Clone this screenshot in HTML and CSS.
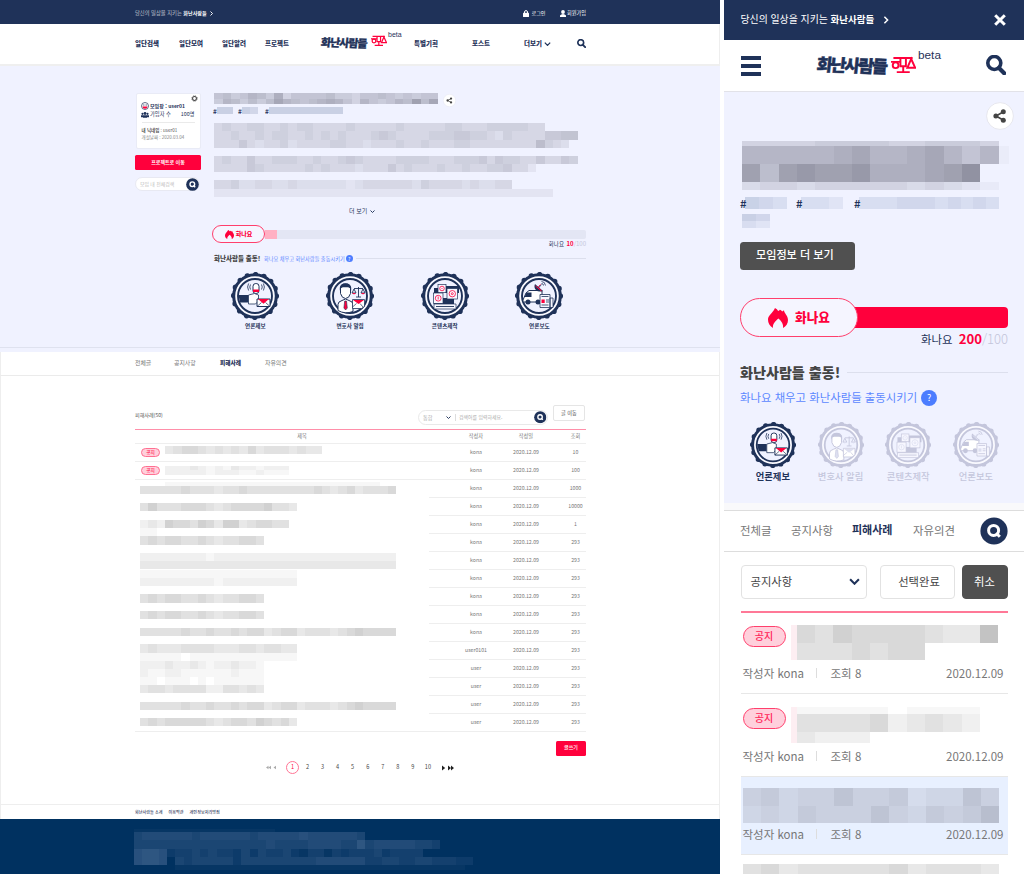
FILE: index.html
```html
<!DOCTYPE html>
<html lang="ko">
<head>
<meta charset="utf-8">
<title>화난사람들</title>
<link rel="stylesheet" href="styles.css">
</head>
<body>
<svg class="defs" width="0" height="0">
  <symbol id="i-search" viewBox="0 0 20 20"><circle cx="8.3" cy="8" r="6.500" fill="none" stroke="currentColor" stroke-width="3.600"/><path d="M13 13l5.200 5.200" stroke="currentColor" stroke-width="4.200" stroke-linecap="round"/></symbol>
  <symbol id="i-find" viewBox="0 0 28 28"><circle cx="14" cy="14" r="13.6" fill="#1f3259"/><circle cx="13.6" cy="13.4" r="5" fill="none" stroke="#fff" stroke-width="3"/><path d="M16 16l3.8 3.8" stroke="#fff" stroke-width="3"/></symbol>
  <symbol id="i-share" viewBox="0 0 28 28"><circle cx="14" cy="14" r="13.4" fill="#fff" stroke="#e2e2ea" stroke-width=".8"/><path d="M17.5 9.8L10 14l7.500 4.200" fill="none" stroke="#444" stroke-width="1.6"/><circle cx="17.300" cy="9.800" r="2.500" fill="#444"/><circle cx="9.900" cy="14" r="2.500" fill="#444"/><circle cx="17.300" cy="18.200" r="2.500" fill="#444"/></symbol>
  <symbol id="i-down" viewBox="0 0 10 6"><path d="M1 1l4 4 4-4" fill="none" stroke="currentColor" stroke-width="1.900"/></symbol>
  <symbol id="i-right" viewBox="0 0 6 10"><path d="M1 1l4 4-4 4" fill="none" stroke="currentColor" stroke-width="1.900"/></symbol>
  <symbol id="i-flame" viewBox="0 0 20 20"><path d="M5 20C1.500 18 0 15 0 11.500 0 7.500 4.500 5.500 7 0c1.500.8 2.500 1.800 3.200 3 .8-.2 1.300-.6 1.600-1.300 1.200.4 1.900 1 2.400 1.700l1.800-1.200C16.200 5.500 20 7.500 20 12c0 3.500-1.800 6.300-5 8 .6-4-1.500-6.800-4.600-9.500C7 13.500 4.400 16 5 20z" fill="#ff003c"/></symbol>
  <symbol id="i-scale" viewBox="0 0 26 18"><g fill="none" stroke="#ff003c" stroke-width="2"><path d="M2.500 2h20M9.800 2v8.500h5.700V2M12.700 10.500v6M6 16.700h13.500M0 6h9"/><circle cx="4.800" cy="9.500" r="3"/><path d="M21 3l-4 9.200h8.200z"/></g></symbol>
  <symbol id="i-seal" viewBox="0 0 48 48"><circle cx="24" cy="24" r="21.300" fill="none" stroke="currentColor" stroke-width="5.600" stroke-linecap="round" stroke-dasharray="0 8.365"/><circle cx="24" cy="24" r="21.300" fill="#fafaff" stroke="currentColor" stroke-width="3"/><circle cx="24" cy="24" r="17" fill="#f0f2ff" stroke="currentColor" stroke-width="1.900"/></symbol>
  <symbol id="i-report" viewBox="0 0 48 48"><use href="#i-seal"/><path d="M7.500 23h10v7.500H9z" fill="currentColor"/><path d="M17.500 23l6-1.500 4 1.500v6l-3 3h-7z" fill="#fff" stroke="currentColor" stroke-width=".8"/><rect x="22" y="11.500" width="6" height="10" rx="2.800" fill="#fff" stroke="currentColor"/><path d="M22 17.500h6v2.500h-6z" fill="var(--accent)"/><path d="M19.500 12.500q-1.500 2.500 0 5M17.600 11.500q-2 3.500 0 7M30.500 12.500q1.500 2.500 0 5M32.400 11.500q2 3.500 0 7" fill="none" stroke="currentColor" stroke-width=".8"/><path d="M26 27h13v7.500H26z" fill="#fff" stroke="currentColor"/><path d="M27 27h11l-5.500 4.800z" fill="var(--accent)"/><path d="M26 34.500l4.500-4M39 34.500l-4.500-4" stroke="currentColor" stroke-width=".7"/></symbol>
  <symbol id="i-lawyer" viewBox="0 0 48 48"><use href="#i-seal"/><path d="M12 38.500v-6q0-3 4-4l3.500-1.500 3.500 1.500q4 1 4 4v7q-8 3-15-1z" fill="#fff" stroke="currentColor"/><path d="M14.500 16q0-4 5-4t5 4v5.500q-1.500 5-5 5t-5-5z" fill="#fff" stroke="currentColor"/><path d="M13.800 18.500v-3q1-4.300 5.700-4.300t5.700 4.300v3q-.7-3-3-3.200h-5.400q-2.300.2-3 3.200z" fill="currentColor"/><path d="M18.700 29h1.800l.8 7-1.700 2-1.700-2z" fill="var(--accent)" stroke="currentColor" stroke-width=".6"/><path d="M32.500 15v10M28 16.500h9M30 25h5M28 17l-2 4h4zM37 17l-2 4h4z" fill="none" stroke="currentColor" stroke-width=".9"/><path d="M26 21h4l-2 1.500zM35 21h4l-2 1.500z" fill="var(--accent)"/><path d="M26.500 27.500h12v7l-3 2h-9z" fill="#fff" stroke="currentColor" stroke-width=".8"/><path d="M27 28h11l-5.500 4z" fill="var(--accent)"/><path d="M26.500 35l4-3.500M37 35l-3-3.500" stroke="currentColor" stroke-width=".7"/></symbol>
  <symbol id="i-content" viewBox="0 0 48 48"><use href="#i-seal"/><path d="M13 16h5v17h-5zM24 14h14v7H24z" fill="currentColor"/><rect x="15" y="26" width="18" height="9" fill="currentColor"/><g fill="#f7f7ff" stroke="currentColor" stroke-width=".7"><rect x="17" y="12.500" width="8" height="8"/><rect x="26" y="16.500" width="10.500" height="10.500"/><rect x="12.500" y="21" width="9.500" height="10.500"/><path d="M13 32h22v5H13z"/></g><g fill="none" stroke="var(--accent)" stroke-width=".8"><circle cx="21" cy="16.500" r="2.300"/><circle cx="31.300" cy="21.700" r="3.200"/><circle cx="31.300" cy="21.700" r="1"/><circle cx="17.200" cy="26.200" r="2.900"/><path d="M20.500 16.500h1M17.200 24.500v3"/></g><path d="M15 34.500h18" stroke="currentColor" stroke-width=".9"/></symbol>
  <symbol id="i-media" viewBox="0 0 48 48"><use href="#i-seal"/><path d="M8 28l3-7 3-2.500h13V30H8z" fill="#fff" stroke="currentColor"/><path d="M11.500 20.500h5V25H9.500z" fill="currentColor"/><circle cx="13" cy="30" r="2.500" fill="currentColor"/><circle cx="23" cy="30" r="2.500" fill="currentColor"/><path d="M20 12l8 7q-4.500 1.500-7-1t-1-6z" fill="currentColor"/><path d="M20.500 14l6 5M26 18.500l-3-3 2.500-3" stroke="var(--accent)" fill="none"/><path d="M23.500 16l3-3.500M26.500 9.500q3.500 0 4 4M26.500 11.500q2 0 2 2" stroke="currentColor" fill="none" stroke-width=".8"/><path d="M25 22.500h10v13H25zM35 26h3v9.500h-3z" fill="#f7f7ff" stroke="currentColor" stroke-width=".8"/><path d="M26.500 24.500h7M31 28h3M31 30h3M26.500 33h7" stroke="currentColor" stroke-width=".8"/><path d="M26.500 27.500h3.200v3.500h-3.200z" fill="var(--accent)"/></symbol>
</svg>

<section class="desk">
  <div class="d-top"><span>당신의 일상을 지키는 <b>화난사람들</b></span><svg class="d-tr"><use href="#i-right"/></svg>
    <span class="d-login"><svg width="6" height="7" viewBox="0 0 6 7"><path d="M1.500 3V2q0-1.400 1.500-1.400T4.500 2v1" fill="none" stroke="#fff"/><rect width="6" height="4.200" y="2.800" rx=".5" fill="#fff"/></svg>로그인</span>
    <span class="d-join"><svg width="6" height="7" viewBox="0 0 6 7"><circle cx="3" cy="2" r="1.900" fill="#fff"/><path d="M0 7V5.500Q1 4 3 4t3 1.500V7z" fill="#fff"/></svg>회원가입</span>
  </div>
  <nav class="d-nav">
    <a>일단검색</a><a>일단모여</a><a>일단알려</a><a>프로젝트</a>
    <span class="logo"><b>화난사람들</b><svg><use href="#i-scale"/></svg><i>beta</i></span>
    <a>특별기획</a><a>포스트</a><a>더보기<svg class="caret"><use href="#i-down"/></svg></a><svg class="srch"><use href="#i-search"/></svg>
  </nav>
  <div class="d-hero">
    <aside class="side">
      <div class="card">
        <svg class="gear" viewBox="0 0 8 8"><circle cx="4" cy="4" r="2.200" fill="none" stroke="#444" stroke-width="1.200"/><circle cx="4" cy="4" r="3.100" fill="none" stroke="#444" stroke-width="1" stroke-dasharray="1.200 1.230"/></svg>
        <p class="who"><svg viewBox="0 0 8 8"><circle cx="4" cy="4" r="3.500" fill="#fff" stroke="#1f3259" stroke-width=".7"/><path d="M1.500 4.500h5Q6.300 6.800 4 6.800T1.500 4.500z" fill="#ff003c"/><path d="M2 3h1.500M4.500 3H6" stroke="#1f3259" stroke-width=".7"/></svg><b>모임장 : user01</b></p>
        <p class="who"><svg viewBox="0 0 8 8"><g fill="#1f3259"><circle cx="1.500" cy="2.800" r="1.100"/><circle cx="4" cy="2.500" r="1.400"/><circle cx="6.500" cy="2.800" r="1.100"/><path d="M0 6.200V4.200h8v2zM2 6.700V4.200h4v2.500z"/></g></svg><span>가입자 수</span><em>100명</em></p>
        <div class="info"><p><b>내 닉네임</b> : user01</p><p>개설날짜 : 2020.03.04</p></div>
      </div>
      <div class="go">프로젝트로 이동</div>
      <div class="sfield"><span>모임 내 전체검색</span><svg><use href="#i-find"/></svg></div>
    </aside>
    <main class="dmain">
      <div class="titleline"><div class="mz t" data-m="67568759466667554667656566 5875757a876789864865687b7a"></div><svg><use href="#i-share"/></svg></div>
      <div class="tags"><b>#</b><div class="mz g" data-m="55"></div><b>#</b><div class="mz g" data-m="54"></div><b>#</b><div class="mz g" data-m="555555555"></div></div>
      <div class="mz p" data-m="4544554454554444544444544444554445555544 44544545544545454445654444555665543544446677 4446434453444455443444544544455444444448543"></div>
      <div class="mz p" data-m="45446445554454456544445555444555646554464465 444465444445454443444645444544544556442"></div>
      <div class="mz p" data-m="445334433433333323444444354444343344 22222222222222222222222222222222222222222"></div>
      <div class="more">더 보기<svg class="caret"><use href="#i-down"/></svg></div>
      <div class="prog"><div class="pill"><svg><use href="#i-flame"/></svg>화나요</div><div class="track"><i></i></div></div>
      <div class="count">화나요 <b>10</b><s>/100</s></div>
      <div class="sec"><b>화난사람들 출동!</b><span>화나요 채우고 화난사람들 출동시키기</span><q>?</q><hr></div>
      <div class="badges">
        <div><svg><use href="#i-report"/></svg>언론제보</div><div><svg><use href="#i-lawyer"/></svg>변호사 알림</div><div><svg><use href="#i-content"/></svg>콘텐츠제작</div><div><svg><use href="#i-media"/></svg>언론보도</div>
      </div>
    </main>
  </div>
  <div class="d-tabs"><a>전체글</a><a>공지사항</a><a class="on">피해사례</a><a>자유의견</a></div>
  <div class="board">
    <div class="bar"><span class="cnt">피해사례(50)</span><div class="find"><span>통합</span><svg class="caret"><use href="#i-down"/></svg><em>검색어를 입력하세요.</em><svg class="fi"><use href="#i-find"/></svg></div><div class="move">글 이동</div></div>
    <div class="row head"><span>제목</span><span>작성자</span><span>작성일</span><span>조회</span></div>
    <div class="row"><span class="ttl"><u>공지</u><div class="mz b" data-m="3455434343534443433"></div></span><span>kona</span><span>2020.12.09</span><span>10</span></div>
    <div class="row"><span class="ttl"><u>공지</u><div class="mz b n" data-m="222321213221222 222221222112111"></div></span><span>kona</span><span>2020.12.09</span><span>100</span></div>
    <div class="lower"><div class="mosaics" id="mosaics"></div><div class="cells" id="cells"></div></div>
    <div class="write">글쓰기</div>
    <div class="pages"><svg class="pl" viewBox="0 0 12 6"><path d="M3 .8v4.400L0 3zM6 .8v4.400L3 3zM12 .8v4.400L9 3z" fill="#aaa"/></svg><a class="on">1</a><a>2</a><a>3</a><a>4</a><a>5</a><a>6</a><a>7</a><a>8</a><a>9</a><a>10</a><svg class="pr" viewBox="0 0 12 6"><path d="M0 .5v5L3.200 3zM6 .5v5L9 3zM9 .5v5L12 3z" fill="#222"/></svg></div>
  </div>
  <div class="links"><a>화난사람들 소개</a><a>이용약관</a><a>개인정보처리방침</a></div>
  <footer><div class="mz f" data-m="11111111111111111 4555555455555545555565555554 4444444444444444544445555447455555443 67762334343324243342133132333423333 67760434444424444444445555553344334433322 0000011111111111111111111111111111111111"></div></footer>
</section>

<section class="mob">
  <div class="m-top"><span>당신의 일상을 지키는 <b>화난사람들</b></span><svg class="m-tr"><use href="#i-right"/></svg><svg class="m-x" viewBox="0 0 12 12"><path d="M1.200 1.200l9.600 9.600M10.800 1.200l-9.600 9.600" stroke="#fff" stroke-width="3"/></svg></div>
  <div class="m-head"><div class="burger"><i></i><i></i><i></i></div><span class="logo"><b>화난사람들</b><svg><use href="#i-scale"/></svg><i>beta</i></span><svg class="srch"><use href="#i-search"/></svg></div>
  <div class="m-hero">
    <svg class="share"><use href="#i-share"/></svg>
    <div class="mz mt" data-m="44445555445554 888889a889a8684a b7bcbbc999abd 34434444434321"></div>
    <div class="m-tags"><b>#</b><div class="mz mg" data-m="543"></div><b>#</b><div class="mz mg" data-m="332"></div><b>#</b><div class="mz mg" data-m="33344434343"></div></div>
    <div class="mz mg2" data-m="54 32"></div>
    <div class="m-btn">모임정보 더 보기</div>
    <div class="prog"><div class="pill"><svg><use href="#i-flame"/></svg>화나요</div><div class="track"></div></div>
    <div class="count">화나요 <b>200</b><s>/100</s></div>
    <div class="sec"><b>화난사람들 출동!</b><hr></div>
    <div class="sub"><span>화나요 채우고 화난사람들 출동시키기</span><q>?</q></div>
    <div class="badges"><div><svg><use href="#i-report"/></svg>언론제보</div><div class="off"><svg><use href="#i-lawyer"/></svg>변호사 알림</div><div class="off"><svg><use href="#i-content"/></svg>콘텐츠제작</div><div class="off"><svg><use href="#i-media"/></svg>언론보도</div></div>
    <hr class="end">
  </div>
  <div class="gapbar"></div>
  <div class="m-tabs"><a>전체글</a><a>공지사항</a><a class="on">피해사례</a><a>자유의견</a><svg><use href="#i-find"/></svg></div>
  <div class="m-tools"><div class="sel">공지사항<svg><use href="#i-down"/></svg></div><div class="done">선택완료</div><div class="cancel">취소</div></div>
  <div class="list">
    <div class="item"><div class="top"><u>공지</u><div class="mz l1" data-m="54655554338 4445455"></div></div><div class="meta"><span>작성자 kona</span><span>조회 8</span><span>2020.12.09</span></div></div>
    <div class="item"><div class="top"><u>공지</u><div class="mz l2" data-m="1111101111 4444523432 3222"></div></div><div class="meta"><span>작성자 kona</span><span>조회 8</span><span>2020.12.09</span></div></div>
    <div class="item sel3"><div class="mz l3" data-m="56455755634475 45465557546568"></div><div class="meta"><span>작성자 kona</span><span>조회 8</span><span>2020.12.09</span></div></div>
    <div class="item last"><div class="mz l3" data-m="45344444534443"></div></div>
  </div>
</section>
<script src="script.js"></script>
</body>
</html>
```

FILE: styles.css
```css
* { box-sizing: border-box; }
body { margin: 0; width: 1024px; height: 874px; overflow: hidden; display: flex; gap: 4px; background: #fff; font-family: "Noto Sans CJK KR", "Noto Sans", sans-serif; line-height: 1; white-space: nowrap; color: #1f3259; --accent: #ff003c; }
p, hr { margin: 0; border: 0; }
svg { flex: none; display: block; overflow: visible; }
.defs { position: absolute; }
i, em { font-style: normal; }
s, u { text-decoration: none; }
q { quotes: none; }
q::before, q::after { content: none; }

/* masked text blocks */
.mz { --cw: 8.27px; --ch: 8.27px; --rgb: 30, 30, 50; flex: none; }
.mz-row { display: flex; height: var(--ch); }
.mz-cell { width: var(--cw); height: 100%; flex: none; background: rgba(var(--rgb), var(--a)); }

.desk { width: 720px; height: 874px; flex: none; font-size: 5.3px; border-right: 1px solid #eee; }
.d-top { height: 24px; margin-right: -1px; padding: 2px 0 0 135px; background: #1f3259; color: #fff; display: flex; align-items: center; }
.d-top > span:first-child { width: 75px; font-weight: 300; }
.d-top b { font-weight: 700; font-size: 5.1px; }
.d-tr { width: 3px; height: 5px; }
.d-login { display: flex; align-items: center; gap: 2.500px; margin-left: 310px; width: 37px; font-size: 5.1px; }
.d-join { display: flex; align-items: center; gap: 1px; font-size: 5.2px; }
.d-nav { height: 42px; margin-right: -1px; padding: 0 0 2px 135px; border-bottom: 2px solid #efefef; display: grid; grid-template-columns: 44px 43px 43px 56px 93px 58px 52px 53px 9px; align-items: center; font-size: 6.500px; font-weight: 900; }
.d-nav .caret { display: inline-block; width: 7px; height: 4px; margin-left: 2px; }
.d-nav .srch { width: 9px; height: 9px; }
.logo { display: flex; align-items: center; }
.logo b { font-weight: 900; font-size: 11px; letter-spacing: -1px; width: 50px; transform: skew(-6deg, 2deg); -webkit-text-stroke: .3px; margin-top: -2px; }
.logo svg { width: 16px; height: 11.500px; margin-top: -4px; }
.logo i { font: 400 7px "Liberation Sans", sans-serif; margin: -17px 0 0 1px; }

.d-hero { height: 286px; margin-right: -1px; background: #f0f2ff; padding: 27px 0 0 135px; display: flex; position: relative; }
.d-hero::after { content: ""; position: absolute; left: 0; right: 0; bottom: 4px; height: 1px; background: #dfe2ef; }
.side { width: 77px; }
.card { width: 65px; height: 56px; margin-left: .5px; background: #fff; border: 1px solid #e9ebf6; border-radius: 2px; padding: 7px 5px 0; position: relative; }
.gear { position: absolute; width: 7px; height: 7px; right: 2px; top: 1px; }
.who { display: flex; height: 9px; align-items: center; font-size: 5.300px; }
.who b { font-size: 5px; }
.who svg { width: 8px; height: 8px; margin: 0 1.500px 0 -1px; }
.who em { margin-left: auto; }
.info { border-top: 1px solid #eaeaea; margin-top: 3px; padding-top: 5px; font-size: 4.500px; color: #555; }
.info p { height: 7px; }
.info p + p { color: #888; }
.go { width: 66px; height: 15px; margin-top: 6px; background: #ff003c; border-radius: 1.500px; color: #fff; font-weight: 700; font-size: 5px; text-align: center; line-height: 13px; }
.sfield { width: 65px; height: 14px; margin-top: 7px; border: 1px solid #e8e9f2; border-radius: 7px; background: #fff; display: flex; align-items: center; justify-content: space-between; padding-left: 4px; font-size: 4.900px; color: #bbb; }
.sfield svg { width: 13px; height: 13px; margin-right: 0; }
.dmain { width: 374px; }
.titleline { display: flex; height: 14px; padding-left: 2px; }
.titleline svg { width: 13px; height: 13px; margin: 1px 0 0 5px; }
.mz.t { --cw: 8.620px; --ch: 5.500px; }
.tags { display: flex; height: 16px; padding-left: 1px; font-size: 6.500px; align-items: flex-start; }
.tags b { width: 3.500px; margin-top: 1px; }
.mz.g { --rgb: 20, 50, 100; --ch: 7px; margin-right: 5px; }
.tags .mz:nth-of-type(2) { margin-right: 7px; }
.mz.p { margin: 0 0 8px 2px; }
.mz.p .mz-cell { opacity: .9; }
.more { display: flex; align-items: center; height: 12px; margin: 0 0 0 137px; font-size: 6px; }
.more .caret { width: 5px; height: 3px; margin: 1px 0 0 3px; }
.prog { display: flex; align-items: center; }
.pill { display: flex; align-items: center; justify-content: center; border: 1px solid #ff3f6c; color: #ff003c; font-weight: 900; background: #f5f5ff; flex: none; }
.desk .prog { height: 19px; margin-top: 8px; }
.desk .pill { width: 53px; height: 18px; border-radius: 9px; font-size: 6px; gap: 2px; }
.desk .pill svg { width: 9px; height: 9px; }
.desk .track { flex: 1; height: 9.500px; background: #e3e6f4; border-radius: 0 2px 2px 0; }
.desk .track i { display: block; width: 12px; height: 100%; background: #ffb0c3; }
.count { text-align: right; }
.count b { color: #ff003c; }
.count s { color: #c3c5da; }
.desk .count { font-size: 5.500px; height: 10px; margin-top: -3px; }
.desk .count b { font-size: 6px; margin-left: 1px; }
.desk .count s { font-size: 6px; }
.sec { display: flex; align-items: center; }
.sec b { font-weight: 900; color: #444; }
.sec hr { flex: 1; height: 1px; background: #dcdfed; }
q { display: block; flex: none; border-radius: 50%; background: #4c7dff; color: #fff; text-align: center; }
.desk .sec { height: 9px; padding-left: 2px; margin-top: 3px; }
.desk .sec b { font-size: 6.500px; width: 50px; }
.desk .sec span { font-size: 5.200px; color: #5c88ff; margin-right: 1px; }
.desk q { width: 7px; height: 7px; font-size: 5px; line-height: 7px; margin-right: 3px; }
.badges { display: grid; text-align: center; }
.badges svg { display: block; margin: 0 auto; }
.desk .badges { grid-template-columns: repeat(4, 94.700px); margin: 9.500px 0 0 -4px; font-size: 5.600px; font-weight: 700; }
.desk .badges svg { width: 48px; height: 48px; margin-bottom: 4px; }

.d-tabs { height: 24px; border-bottom: 1px solid #ebebeb; border-left: 1px solid #eee; padding: 0 0 1px 134px; display: grid; grid-template-columns: 39px 46px 45px 40px; align-items: center; font-size: 5.900px; color: #777; }
.d-tabs .on { color: #1f3259; font-weight: 900; font-size: 5.700px; margin-top: -1px; }
.board { height: 428px; border-left: 1px solid #eee; padding: 29px 0 0 134px; color: #777; }
.bar { width: 451px; height: 24px; display: flex; }
.cnt { width: 283px; padding-top: 7px; font-size: 5.100px; color: #555; }
.find { width: 130px; height: 15px; margin-top: 5px; border: 1px solid #e9e9e9; border-radius: 8px; display: flex; align-items: center; padding-left: 4px; font-size: 5.200px; color: #aaa; }
.find .caret { width: 5px; height: 3px; margin: 0 4px 0 13.500px; color: #1f3259; }
.find em { border-left: 1px solid #ddd; padding: 1px 0 1px 3px; font-size: 4.900px; width: 79px; }
.fi { width: 12.500px; height: 12.500px; }
.move { width: 32px; height: 16px; margin-left: 5px; border: 1px solid #e5e5e5; border-radius: 2px; font-size: 5.200px; line-height: 14px; text-align: center; color: #444; }
.row { width: 451px; height: 18px; padding-bottom: 1px; border-bottom: 1px solid #eee; display: grid; grid-template-columns: 332px 18px 82px 17px; align-items: center; font-size: 5.200px; }
.row span:not(:first-child) { justify-self: center; }
.head { border-top: 1px solid #ff8fa9; height: 15px; }
.head span:first-child { text-align: center; padding-left: 2px; }
.ttl { display: flex; align-items: center; padding-left: 6px; }
.ttl u { width: 19px; height: 9px; border: 1px solid #ff6f91; border-radius: 5px; background: #ffd0dc; color: #ff2458; text-align: center; font-size: 4.700px; line-height: 7px; font-weight: 500; margin-right: 5px; }
.mz.b { --rgb: 40, 40, 40; margin-top: -4px; }
.mz.b.n { --ch: 4.500px; margin-top: 0; }
.lower { display: flex; width: 451px; height: 252px; border-bottom: 1px solid #eee; }
.mosaics { width: 294px; padding: 2px 0 0 5px; --x: 0; }
.mosaics .mz { --rgb: 40, 40, 40; }
.cells .row { width: 157px; grid-template-columns: 38px 18px 82px 17px; }
.write { width: 30px; height: 15px; margin: 9px 0 0 421px; border-radius: 1.500px; background: #ff003c; color: #fff; font-weight: 500; font-size: 5px; line-height: 12px; text-align: center; }
.pages { display: flex; align-items: center; height: 13px; margin: 5px 0 0 130px; font-size: 5.600px; color: #444; }
.pages a { width: 15.050px; text-align: center; }
.pages .on { width: 13px; height: 13px; border: 1px solid #ff7595; border-radius: 50%; color: #ff003c; line-height: 11px; margin: 0 1px; }
.pl { width: 12px; height: 5px; margin-right: 8px; }
.pr { width: 12px; height: 6px; margin-left: 7px; }
.links { height: 15px; border-top: 1px solid #eee; border-left: 1px solid #eee; padding-left: 134px; display: flex; gap: 6px; align-items: center; font-size: 4.100px; font-weight: 500; }
footer { height: 55px; overflow: hidden; margin-right: -1px; background: #003160; padding: 10px 0 0 134px; }
.mz.f { --rgb: 190, 200, 235; }
.mz.f .mz-row:first-child { height: 3px; }
.mz.f .mz-row:last-child { height: 5px; }

.mob { width: 300px; height: 874px; overflow: hidden; flex: none; }
.m-top { height: 40px; background: #1f3259; color: #fff; display: flex; align-items: center; padding: 0 18px 0 16.500px; font-size: 9.900px; }
.m-top > span { width: 142px; }
.m-top b { font-weight: 700; font-size: 9.500px; }
.m-tr { width: 6px; height: 8px; }
.m-x { width: 12px; height: 12px; margin-left: auto; }
.m-head { height: 52px; border-bottom: 1px solid #e2e2e8; padding: 0 18px 0 17px; display: flex; align-items: center; }
.burger { width: 20px; height: 20px; display: flex; flex-direction: column; justify-content: space-between; }
.burger i { height: 4px; background: #1f3259; }
.m-head .logo { margin-left: 56px; }
.m-head .logo b { font-size: 17.200px; width: 74px; letter-spacing: -2px; -webkit-text-stroke: .4px; }
.m-head .logo svg { width: 25px; height: 17.500px; margin-top: -2px; }
.m-head .logo i { font-size: 11.800px; margin: -22px 0 0 2px; }
.m-head .srch { width: 20px; height: 20px; margin: -2px 0 0 auto; }
.m-hero { height: 411px; background: #f0f2ff; padding: 9.500px 16px 0; }
.end { height: 1px; background: #dcdde8; }
.share { width: 28px; height: 28px; margin: 0 -6px 0 auto; }
.mz.mt { --cw: 18.350px; --ch: 18px; margin: 11.500px 0 0 2px; }
.mz.mt .mz-row:nth-child(1) { height: 5px; }
.mz.mt .mz-row:nth-child(2) { width: 267px; overflow: hidden; }
.mz.mt .mz-row:nth-child(2) .mz-cell:nth-child(n+15) { opacity: .2; }
.mz.mt .mz-row:last-child { height: 8px; }
.m-tags { display: flex; height: 17px; margin-top: 7px; font-size: 11px; }
.m-tags b { width: 5px; margin-top: 1px; }
.mz.mg { --cw: 14px; --ch: 12px; --rgb: 20, 60, 120; }
.m-tags .mg { margin-right: 9px; }
.m-tags .mg:nth-of-type(2) { margin-right: 11px; }
.m-tags .mg:last-child { --cw: 12.700px; margin-right: 0; }
.mz.mg2 { --rgb: 20, 50, 110; --cw: 14px; --ch: 7px; margin-left: 2px; }
.m-btn { width: 115px; height: 28.500px; margin-top: 13.500px; border-radius: 3.500px; background: #505050; color: #fff; font-weight: 500; font-size: 11.100px; line-height: 24px; padding-left: 16px; }
.mob .prog { height: 39px; margin-top: 28px; margin-right: .5px; }
.mob .pill { width: 118px; height: 39px; border-radius: 20px; font-size: 12.600px; gap: 7px; z-index: 1; }
.mob .pill svg { width: 20px; height: 20px; }
.mob .track { flex: 1; height: 21.500px; margin-left: -3px; background: #ff003c; border-radius: 0 4px 4px 0; }
.mob .count { font-size: 11.400px; height: 16px; margin-top: -6px; line-height: 16px; }
.mob .count b { font-size: 13.200px; margin-left: 3px; }
.mob .count s { font-size: 13px; font-weight: 300; }
.mob .sec { height: 22px; margin-top: 14px; }
.mob .sec b { font-size: 14.100px; margin-right: 7px; }
.sub { display: flex; align-items: center; gap: 4px; height: 18px; margin-top: 6px; font-size: 11.400px; color: #5c88ff; }
.sub q { width: 16px; height: 16px; font-size: 9px; line-height: 16px; }
.mob .badges { grid-template-columns: repeat(4, 67.700px); height: 83px; margin: 14.500px 0 0 -1px; font-size: 9.300px; font-weight: 700; }
.mob .badges svg { width: 46px; height: 46px; margin-bottom: 4px; }
.mob .badges .off { color: #c4c6dc; font-weight: 500; --accent: #dddff0; }
.gapbar { height: 8px; background: #f9f9fb; border-bottom: 1px solid #ddd; }
.m-tabs { height: 41px; border-bottom: 1px solid #ddd; padding-left: 16px; display: grid; grid-template-columns: 51px 61px 61px 67px 28px; align-items: center; font-size: 11.400px; color: #777; }
.m-tabs .on { font-weight: 700; font-size: 11px; color: #1f3259; margin-top: -4px; }
.m-tabs svg { width: 28px; height: 28px; }
.m-tools { display: flex; height: 59px; padding: 13px 16px 0 16.500px; font-size: 11.300px; color: #444; }
.m-tools > div { height: 34px; border: 1px solid #e2e2e2; border-radius: 4px; display: flex; align-items: center; justify-content: center; padding-bottom: 1px; }
.m-tools .sel { width: 126.500px; justify-content: space-between; padding: 0 6px 1px 9px; }
.sel svg { width: 11px; height: 7px; color: #1f3259; }
.m-tools .done { width: 75px; margin-left: 13px; padding-left: 3px; }
.m-tools .cancel { width: 46px; margin-left: 6.500px; background: #505050; border-color: #505050; color: #fff; }
.list { margin: 0 16.500px; border-top: 2px solid #ff7897; font-size: 11.500px; color: #777; }
.item { height: 81px; padding: 12px 0 0 2px; border-bottom: 1px solid #e7e7e7; display: flex; flex-direction: column; justify-content: space-between; }
.item + .item { height: 83px; padding-top: 10px; }
.top { display: flex; }
.top u { width: 43px; height: 20.500px; border: 1px solid #ff3f6c; border-radius: 10.500px; background: #ffd0dc; color: #ff2458; text-align: center; font-size: 10px; font-weight: 500; line-height: 18px; margin: 1px 5px 0 0; }
.item + .item .top u { margin-top: 4px; }
.mz.l1 { --cw: 18.350px; --ch: 17.500px; --rgb: 40, 40, 40; border-left: 6px solid #fdeef2; }
.mz.l2 { --cw: 18.350px; --ch: 18px; --rgb: 40, 40, 40; border-left: 6px solid #fdeef2; margin-top: 3px; }
.mz.l2 .mz-row:first-child { height: 7px; }
.mz.l2 .mz-row:last-child { height: 11px; }
.mz.l3 { --cw: 18.350px; --ch: 17.500px; --rgb: 40, 40, 40; }
.meta { display: grid; grid-template-columns: 73px 15px 1fr; height: 12px; margin-bottom: 13px; padding-right: 4px; }
.meta span:nth-child(2) { border-left: 1px solid #ddd; padding-left: 14px; height: 10px; line-height: 10px; }
.meta span:last-child { text-align: right; }
.item.sel3 { height: 78px; background: #e8f0ff; padding-top: 11px; }
.sel3 .mz { --rgb: 60, 60, 80; }
.item.last { border: 0; padding-top: 9px; justify-content: flex-start; height: 30px; }
```

FILE: script.js
```js
// Masked title lines of the board: [gap above, height, shade levels]
const full = "4444454454454553455344434565555";
const long = "45455555434554654534";
const mid = "454554454344554";
const lines = [
  [0, 4, "00011111111111111111111111111"],
  [0, 8.3, "4444454443445444444445434534445"],
  [8.7, 8.3, "4644455543455556443"],
  [8.3, 8.3, "232655465366345544"],
  [0, 8, "11"],
  [0.5, 8.3, mid],
  [8, 8.3, "2222222212222222222222222222222"],
  [0, 8.3, "3333333333333333333333333333333"],
  [0.5, 8, "1111111111111111111"],
  [0, 8.3, "2222222221222222222"],
  [8.4, 8.3, mid],
  [8.4, 8.3, mid],
  [8.4, 8.3, full],
  [8.2, 8.3, "3433344443334434433"],
  [0, 8, "1111101111111111111"],
  [0.2, 8.3, "222322321223221"],
  [0, 8.3, "211221111112111"],
  [0, 7.5, "110111010111111"],
  [0, 8.3, "344344442244343"],
  [8.4, 8.3, full],
  [8, 8.3, long.slice(0, 19)]
];
const host = document.getElementById("mosaics");
for (const [gap, h, cells] of lines) {
  const m = document.createElement("div");
  m.className = "mz";
  m.dataset.m = cells;
  m.style.marginTop = gap + "px";
  m.style.setProperty("--ch", h + "px");
  host.append(m);
}
for (const m of document.querySelectorAll(".mz")) {
  for (const row of m.dataset.m.split(" ")) {
    const r = document.createElement("div");
    r.className = "mz-row";
    for (const ch of row) {
      const c = document.createElement("span");
      c.className = "mz-cell";
      c.style.setProperty("--a", parseInt(ch, 16) * 0.035);
      r.append(c);
    }
    m.append(r);
  }
}
const writers = ["kona", "kona", "kona", "kona", "kona", "kona", "kona", "kona", "kona", "user0101", "user", "user", "user", "user"];
const views = [1000, 10000, 1];
document.getElementById("cells").innerHTML = writers.map((w, i) =>
  `<div class="row"><i></i><span>${w}</span><span>2020.12.09</span><span>${views[i] ?? 293}</span></div>`).join("");
```
